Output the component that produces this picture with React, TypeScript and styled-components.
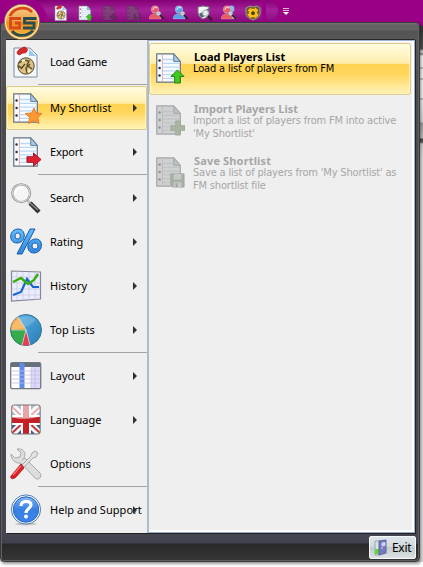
import React from "react";
import styled, { createGlobalStyle, css } from "styled-components";

const Global = createGlobalStyle`
  body { margin: 0; background: #fff; overflow: hidden; }
  * { box-sizing: border-box; }
`;
const gold = css`
  border: 1px solid #dfc98d;
  background: linear-gradient(#fffce2 0%, #fff0b2 34%, #ffe9a0 39%, #ffd351 41%, #ffd65c 60%, #ffefad 95%, #ffe69a 100%);
  box-shadow: inset 0 0 0 1px rgba(255, 250, 210, 0.65);
`;
const Screen = styled.div`
  position: relative; width: 423px; height: 567px; overflow: hidden; background: #fff;
  font-family: "Noto Sans", "Open Sans", sans-serif; color: #000;
`;
const TitleBar = styled.div`
  height: 26px; background: #990085; display: flex; align-items: flex-start;
`;
const QuickBar = styled.div`
  width: 278px; height: 22px; border-radius: 0 11px 11px 0;
  background:
    linear-gradient(90deg, #990085 22px, transparent 22px),
    radial-gradient(circle at 22px 22px, #990085 25px, transparent 26px),
    linear-gradient(90deg, transparent 262px, #990085 262px, #990085 266px, transparent 266px),
    linear-gradient(#850075, #a5219a 45%, #8a087c);
  display: flex; align-items: center; padding: 3px 0 0 53px; gap: 8px;
`;
const Slot = styled.div<{ $dim?: boolean }>`
  width: 16px; height: 16px; flex: none; opacity: ${p => (p.$dim ? 0.5 : 1)};
  filter: ${p => (p.$dim ? "grayscale(1) brightness(.42)" : "none")};
  svg { display: block; width: 16px; height: 16px; }
`;
const Overflow = styled.div` width: 6px; margin: 8px 0 0 5px; svg { display: block; } `;
const Backdrop = styled.div`
  height: 536px;
  background: linear-gradient(#353535, #505050 23px, #999 24px, #ddd 26px, #777 28px, #eee 30px, #eee 41px, #888 42px, #eee 43px, #eee 52px, #888 53px, #eee 54px, #eee 72px, #888 73px, #e8eaeb 74px, #ccd0d2 96px, #999 97px, #bbb 112px, #444 113px, #555 116px, #ccc 118px, #dcdcdc 130px);
`;
const Frame = styled.div`
  position: absolute; left: 0; top: 22px; width: 420px; height: 540px; border: 1px solid #3a3a3a; border-radius: 4px;
  background: linear-gradient(#777 0, #626262 2px, #646464 7px, #535353 8px, #58585a 17px, #4c4c50 80px, #45464f 508px, #414450 520px, #292929 521px, #363636 538px);
  box-shadow: inset 1px 0 0 #606064, inset -1px -1px 0 #606064, 1px 2px 3px rgba(0,0,0,.4); padding: 16px 4px 0 5px;
`;
const Panels = styled.div` display: flex; width: 409px; height: 494px; border-top: 1px solid #282828; box-shadow: 1px 1px 0 #222; `;
const Side = styled.nav` width: 141px; height: 493px; background: #efefef; `;
const MenuRow = styled.div<{ $active?: boolean }>`
  height: 44px; position: relative; display: flex; align-items: center; padding-left: 4px; border: 1px solid transparent;
  ${p => p.$active && gold} ${p => p.$active && "border-radius: 2px;"}
`;
const BigIcon = styled.div` width: 32px; height: 32px; margin-left: -1px; flex: none; svg { display: block; } `;
const Label = styled.span<{ $ls: number }>`
  margin-left: 8px; font-size: 11px; line-height: 16px; white-space: nowrap; letter-spacing: ${p => p.$ls}px;
`;
const Arrow = styled.span`
  position: absolute; left: 126px; top: 17px; width: 0; height: 0;
  border: 4px solid transparent; border-left: 4px solid #303030; border-right: 0;
`;
const Divider = styled.div` height: 2px; margin-left: 32px; border-top: 1px solid #a4a4a4; `;
const Content = styled.section`
  width: 268px; height: 493px; border: 1px solid #9db1cd; border-left: 2px solid #a9bbd1; padding: 2px 3px 0 0; background: #efefef;
  box-shadow: inset -2px -2px 0 #fff, inset 0 1px 0 #fff;
`;
const Command = styled.div<{ $active?: boolean; $off?: boolean }>`
  height: 52px; display: flex; border: 1px solid transparent; border-radius: 3px; color: ${p => (p.$off ? "#a6a6a6" : "#000")};
  ${p => p.$active && gold}
  ${BigIcon} { margin: 8px 0 0 3px; ${p => p.$off && "opacity: .45; filter: grayscale(.55) brightness(.68);"} }
`;
const CommandText = styled.div` margin: 6px 0 0 8px; `;
const Title = styled.div<{ $ls: number }>`
  font: bold 11px/13px "Noto Sans", sans-serif; letter-spacing: ${p => p.$ls}px; padding-left: 1px; white-space: nowrap;
`;
const Detail = styled.div`
  font: 11px/13px "DejaVu Sans Condensed", "DejaVu Sans", sans-serif; letter-spacing: -0.17px; white-space: nowrap;
  &:nth-child(2) { margin-top: -1px; }
`;
const Footer = styled.div` display: flex; justify-content: flex-end; padding-top: 3px; `;
const Exit = styled.button`
  width: 47px; height: 23px; border: 1px solid #f5f8f9; border-radius: 2px; padding: 0 0 0 4px; margin-right: -1px;
  background: linear-gradient(#dfe6e9, #d2dade 45%, #c1cacd 50%, #dce2e4); display: flex; align-items: center; gap: 4px;
  font: 12px "Noto Sans", sans-serif; letter-spacing: -.3px; color: #000;
`;
const Orb = styled.div` position: absolute; left: 3px; top: 3px; width: 38px; height: 38px; `;

const Page = () => (
  <g>
    <path d="M4 2h18l7 8v22H4z" fill="#f8fbff" stroke="#667482" strokeWidth="1.3" />
    <path d="M10 8h12M10 12h18M10 16h18M10 20h18M10 24h18M10 28h18" stroke="#b8d9f3" strokeWidth="1.4" />
    <path d="M10 3v28" stroke="#f0a7aa" />
    <path d="M22 2v8h7z" fill="#a5cae9" stroke="#61798f" />
    <g fill="#29323a"><circle cx="7" cy="9" r="1.3" /><circle cx="7" cy="17" r="1.3" /><circle cx="7" cy="25" r="1.3" /></g>
  </g>
);
const SheetIcon = ({ mark }: { mark: string }) => (
  <svg width="32" height="32" viewBox="0 0 34 34">
    <Page />
    {mark === "star" && <path d="M25.5 17l2.4 5.3 6 .5-4.4 4.5 1.3 6.2-5.3-3.2-5.8 3.2 1.2-6.2-4.6-4.5 6.6-.5z" fill="#ff9830" stroke="#e07a26" />}
    {mark === "right" && <path d="M18 22h7v-4l8 7-8 7v-4h-7z" fill="#e01f31" stroke="#9e1220" />}
    {mark === "up" && <path d="M26 19l7 7h-4v7h-6v-7h-4z" fill="#40c91c" stroke="#217e13" />}
    {mark === "plus" && <path d="M24 18h5v5h5v5h-5v5h-5v-5h-5v-5h5z" fill="#5fb238" stroke="#3f8b2d" />}
    {mark === "disk" && <g><path d="M19 19h14v14H21l-2-2z" fill="#4cab3c" stroke="#317f2b" /><path d="M22 19h8v6h-8zM22 28h8v5h-8z" fill="#dbe8d9" /><path d="M24 29h2v4h-2z" fill="#48733f" /></g>}
  </svg>
);
const GameIcon = () => (
  <svg width="32" height="32" viewBox="0 0 32 32">
    <path d="M4 2h16l7 7v22H4z" fill="#f5f9ff" stroke="#7d8e9e" />
    <path d="M19 3v7h7z" fill="#9bc7ef" />
    <circle cx="16" cy="20" r="8.2" fill="#dcc383" stroke="#51452b" />
    <path d="M9 17l5-3 5 1-2 4 5 4M11 23l4-5M17 27l-1-5 4-4M8 20l4 2" stroke="#5b4c2c" strokeWidth="1.4" fill="none" />
    <path d="M12 15l3-1M20 24l-2 2" stroke="#fff8d5" strokeWidth="2" />
    <path d="M8 5c2-3 3-2 4-3 3-2 6 0 5 3-1 3-4 1-6 3-3 2-5-1-3-3z" fill="#d62a28" stroke="#b52022" />
  </svg>
);
const SearchIcon = () => (
  <svg width="32" height="32" viewBox="0 0 32 32">
    <path d="M17 18l4 4" stroke="#bbb" strokeWidth="2.4" /><path d="M20 21l9 9" stroke="#333" strokeWidth="4.4" /><path d="M20 21l8 7" stroke="#888" strokeWidth="1.6" />
    <circle cx="11.2" cy="11.2" r="8.9" fill="#f5f5f5" stroke="#999" strokeWidth="2.3" /><circle cx="11.2" cy="11.2" r="8.7" fill="none" stroke="#ddd" />
    <path d="M5 12c0-5 4-7 8-6" stroke="#fff" strokeWidth="2" fill="none" />
  </svg>
);
const PercentIcon = () => (
  <svg width="32" height="32" viewBox="0 0 32 32">
    <defs><linearGradient id="pc" x2="0" y2="1"><stop stopColor="#63bdfa" /><stop offset="1" stopColor="#2f86de" /></linearGradient></defs>
    <g stroke="#175cae" strokeWidth="1" fill="url(#pc)">
      <path d="M20 3h5L12 28H7z" />
      <path fillRule="evenodd" d="M8 3c9 0 8 14-1 14C-2 17-1 3 8 3zm0 4c-4 0-4 6 0 6 3 0 3-6 0-6zM26 13c8 0 7 14-2 14-9 0-8-14 2-14zm-1 4c-4 0-4 6 0 6s4-6 0-6z" />
    </g>
  </svg>
);
const HistoryIcon = () => (
  <svg width="32" height="32" viewBox="0 0 32 32">
    <path d="M1.5 1l29 1v27l-29 2z" fill="#ececff" stroke="#858798" strokeWidth="1.2" />
    <path d="M2 7h28M2 13h28M2 19h28M2 25h28M7 2v28M13 2v28M19 2v28M25 2v28" stroke="#c7c8dd" strokeWidth=".7" />
    <path d="M3 25l8-3 6-13 6 8h6" fill="none" stroke="#1965ce" strokeWidth="2.2" />
    <path d="M3 12l8-4 7 6 6-4 4-6" fill="none" stroke="#35ad0b" strokeWidth="2.4" />
  </svg>
);
const PieIcon = () => (
  <svg width="32" height="32" viewBox="0 0 32 32">
    <defs><linearGradient id="pie" x2="1" y2="1"><stop stopColor="#64b9ec" /><stop offset="1" stopColor="#247bb3" /></linearGradient></defs>
    <circle cx="16" cy="16" r="15.5" fill="url(#pie)" stroke="#357399" />
    <path d="M16 16L8 3a15 15 0 0 0-7 13z" fill="#f9ad4c" stroke="#c69a64" strokeWidth=".6" />
    <path d="M16 16H1a15 15 0 0 0 11 15z" fill="#35ac4b" stroke="#2d7c40" strokeWidth=".6" />
    <path d="M16 16l-4 15q4 1 8 0z" fill="#e33e51" />
    <path d="M8 3l8 13H1M16 16l-4 15M16 16l4 15" stroke="#eee" strokeWidth=".7" fill="none" />
    <path d="M2 16C2 5 16-2 26 6c-6 6-11 8-24 10z" fill="#fff" opacity=".16" />
  </svg>
);
const LayoutIcon = () => (
  <svg width="32" height="32" viewBox="0 0 32 32">
    <rect x=".7" y="2.7" width="30" height="26" rx="1.5" fill="#fff" stroke="#737780" strokeWidth="1.3" />
    <path d="M1 3h29v4H1z" fill="#66717b" /><path d="M9.5 3h5v25h-5z" fill="#6289ed" /><path d="M21 7h9v21h-9z" fill="#ddd8ff" />
    <path d="M2 11h28M2 15h28M2 19h28M2 23h28M21 8v20M25 8v20" stroke="#c0c0d5" strokeWidth=".8" />
  </svg>
);
const FlagIcon = () => (
  <svg width="32" height="32" viewBox="0 0 32 32">
    <defs><clipPath id="fc"><rect x="2" y="1" width="28" height="29" rx="2" /></clipPath></defs>
    <g clipPath="url(#fc)"><path d="M1 1h30v30H1z" fill="#3d5781" /><path d="M1 1l30 30M31 1L1 31" stroke="#f4f4f4" strokeWidth="7" /><path d="M1 2l30 28M31 2L1 30" stroke="#c4333b" strokeWidth="2" />
      <path d="M16 0v31M0 16h32" stroke="#fff" strokeWidth="10" /><path d="M16 0v31M0 16h32" stroke="#c52026" strokeWidth="6" />
      <path d="M0 0h32v12Q16 17 0 13z" fill="#fff" opacity=".6" /></g>
    <rect x="1.7" y="1" width="28.5" height="29" rx="2" fill="none" stroke="#71777c" />
  </svg>
);
const ToolsIcon = () => (
  <svg width="32" height="32" viewBox="0 0 32 32">
    <path d="M12 12l3-2 15 15c3 4-2 8-5 5L11 15C6 16 1 12 1 6l4 4 5-1 1-4-4-4c6-1 10 4 7 9" fill="#ddd" stroke="#999" strokeWidth=".8" />
    <path d="M25 3l3 2-2 4-3 1-9 9-2-2 9-9 1-3z" fill="#e3e3e3" stroke="#999" strokeWidth=".8" />
    <path d="M11 16l3 4-8 9c-2 2-6 3-5-1z" fill="#dc1e25" stroke="#a4161a" strokeWidth=".8" /><path d="M11 18L3 27" stroke="#ff7373" strokeWidth="1.2" />
  </svg>
);
const HelpIcon = () => (
  <svg width="32" height="32" viewBox="0 0 32 32">
    <defs><linearGradient id="hp" x2="0" y2="1"><stop stopColor="#81b6f4" /><stop offset=".5" stopColor="#3581e2" /><stop offset="1" stopColor="#3f82ec" /></linearGradient></defs>
    <ellipse cx="16" cy="30" rx="11" ry="1.5" fill="#aaa" opacity=".6" /><circle cx="16" cy="15.5" r="14.6" fill="#fff" stroke="#4c79b0" /><circle cx="16" cy="15.5" r="12.7" fill="url(#hp)" stroke="#2464bc" />
    <path d="M11 12c0-6 10-6 10-1 0 3-5 4-5 8" fill="none" stroke="#fff" strokeWidth="3.2" /><circle cx="16" cy="22.6" r="2" fill="#fff" />
  </svg>
);
const PersonIcon = ({ color, two }: { color: string; two?: boolean }) => (
  <svg viewBox="0 0 16 16">
    {two && <g fill="#88bdeb"><circle cx="10" cy="4" r="3.4" /><path d="M6 14c0-5 7-6 8 0z" /></g>}
    <circle cx="6" cy="4.5" r="3.7" fill={color} stroke="#fff" strokeOpacity=".6" strokeWidth=".6" />
    <path d="M0 14c0-7 11-7 12 0z" fill={color} stroke="#fff" strokeOpacity=".4" strokeWidth=".5" />
    <path d="M4 5c0-3 3-3 4-2" stroke="#fff" strokeWidth="1.3" fill="none" opacity=".7" />
    <circle cx="9.5" cy="8.5" r="2.5" fill="#dce8eb" opacity=".8" stroke="#777" strokeWidth=".7" /><path d="M11 10l4 4" stroke="#242424" strokeWidth="1.6" />
  </svg>
);
const ShieldSearch = () => (
  <svg viewBox="0 0 16 16"><path d="M1 2l5-1 6 1v6c0 3-3 5-6 6-3-1-5-4-5-7z" fill="#f1f5f4" stroke="#777" /><path d="M2 9l10-6v4c-2 3-5 5-8 6z" fill="#52677a" /><circle cx="8.5" cy="8" r="3" fill="#dff0f4" stroke="#aaa" /><path d="M11 11l4 4" stroke="#222" strokeWidth="1.8" /></svg>
);
const ShieldBall = () => (
  <svg viewBox="0 0 16 16"><path d="M1 3l4-2 3 1 4-1 3 2v6c0 3-4 5-7 6-3-1-7-3-7-6z" fill="#5a5748" stroke="#a09a80" /><circle cx="8" cy="8" r="5.8" fill="#f8bd1c" /><path d="M8 6l2 1.5-.8 2.5H6.800L6 7.500z" fill="#463c15" /><path d="M3 6v3M13 6v3M6 3h4M6 13h4" stroke="#463c15" strokeWidth="1.2" /></svg>
);
const DoorIcon = () => (
  <svg width="14" height="17" viewBox="0 0 14 17"><path d="M1 2h5v14H1z" fill="#cde9d9" stroke="#9aa4b5" /><path d="M1 10h4v5H1z" fill="#5bdb2c" /><path d="M5 2l7-1v13l-7 2z" fill="#7779bd" stroke="#6265a5" /><path d="M8 4l3-.5v3l-3 .5zM7 9h2" fill="#cdd1f4" stroke="#dadcff" strokeWidth=".8" /></svg>
);
const Logo = () => (
  <svg width="38" height="38" viewBox="0 0 38 38">
    <defs><linearGradient id="lg" x2="0" y2="1"><stop stopColor="#f7cf92" /><stop offset=".48" stopColor="#eea548" /><stop offset=".5" stopColor="#e98a1c" /><stop offset="1" stopColor="#ffc24b" /></linearGradient></defs>
    <circle cx="19" cy="19" r="17.700" fill="url(#lg)" stroke="#7b6552" strokeWidth=".8" /><circle cx="19" cy="19" r="16.500" fill="none" stroke="#ffe0ae" strokeWidth="1.200" />
    <path d="M7 13C11 4 23 3 29 9" fill="none" stroke="#d8491a" strokeWidth="2.800" />
    <path d="M18 15.500H7.500V25H16.500V20H12" fill="none" stroke="#d8491a" strokeWidth="2.800" />
    <path d="M33.500 15.500H21.500V20H31V25H20" fill="none" stroke="#284e50" strokeWidth="2.800" />
    <path d="M9 28C14 34 24 34 30 27.500" fill="none" stroke="#284e50" strokeWidth="2.800" />
  </svg>
);

const menu: { label: string; icon: React.ReactNode; ls?: number; arrow?: boolean; active?: boolean; divider?: boolean }[] = [
  { label: "Load Game", icon: <GameIcon />, ls: -0.2, divider: true },
  { label: "My Shortlist", icon: <SheetIcon mark="star" />, arrow: true, active: true },
  { label: "Export", icon: <SheetIcon mark="right" />, ls: -0.15, arrow: true, divider: true },
  { label: "Search", icon: <SearchIcon />, ls: -0.15, arrow: true },
  { label: "Rating", icon: <PercentIcon />, arrow: true },
  { label: "History", icon: <HistoryIcon />, arrow: true },
  { label: "Top Lists", icon: <PieIcon />, arrow: true, divider: true },
  { label: "Layout", icon: <LayoutIcon />, arrow: true },
  { label: "Language", icon: <FlagIcon />, arrow: true },
  { label: "Options", icon: <ToolsIcon />, divider: true },
  { label: "Help and Support", icon: <HelpIcon />, ls: 0.05, arrow: true },
];
const commands = [
  { title: "Load Players List", ls: -0.05, mark: "up", lines: ["Load a list of players from FM"] },
  { title: "Import Players List", ls: 0, mark: "plus", lines: ["Import a list of players from FM into active", "'My Shortlist'"] },
  { title: "Save Shortlist", ls: 0.15, mark: "disk", lines: ["Save a list of players from 'My Shortlist' as", "FM shortlist file"] },
];

export default function App() {
  return (
    <Screen>
      <Global />
      <TitleBar>
        <QuickBar>
          <Slot><GameIcon /></Slot><Slot><SheetIcon mark="up" /></Slot>
          <Slot $dim><SheetIcon mark="plus" /></Slot><Slot $dim><SheetIcon mark="disk" /></Slot>
          <Slot><PersonIcon color="#e85b64" /></Slot><Slot><PersonIcon color="#5aa5e7" /></Slot>
          <Slot><ShieldSearch /></Slot><Slot><PersonIcon color="#e85b64" two /></Slot><Slot><ShieldBall /></Slot>
        </QuickBar>
        <Overflow><svg width="6" height="8"><path d="M0 .5h6M0 2.5h6" stroke="#dcb4d7" /><path d="M0 4h6L3 7z" fill="#fff" /></svg></Overflow>
      </TitleBar>
      <Backdrop />
      <Frame>
        <Panels>
          <Side>
            {menu.map(m => (
              <React.Fragment key={m.label}>
                <MenuRow $active={m.active}>
                  <BigIcon>{m.icon}</BigIcon><Label $ls={m.ls ?? 0}>{m.label}</Label>{m.arrow && <Arrow />}
                </MenuRow>
                {m.divider && <Divider />}
              </React.Fragment>
            ))}
          </Side>
          <Content>
            {commands.map((c, i) => (
              <Command key={c.title} $active={i === 0} $off={i > 0}>
                <BigIcon><SheetIcon mark={c.mark} /></BigIcon>
                <CommandText><Title $ls={c.ls}>{c.title}</Title>{c.lines.map(l => <Detail key={l}>{l}</Detail>)}</CommandText>
              </Command>
            ))}
          </Content>
        </Panels>
        <Footer><Exit><DoorIcon />Exit</Exit></Footer>
      </Frame>
      <Orb><Logo /></Orb>
    </Screen>
  );
}
